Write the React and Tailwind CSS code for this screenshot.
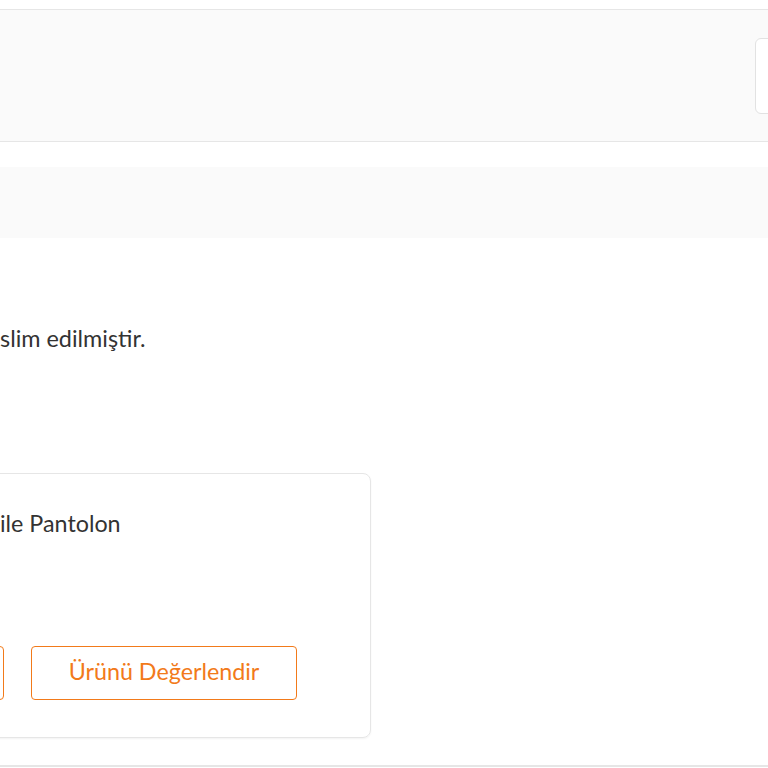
export default function App() {
  const font = { fontFamily: '"Lato", "Open Sans", sans-serif' };
  return (
    <div className="w-[768px] h-[768px] overflow-hidden bg-white flex flex-col" style={font}>
      <div className="h-[9px] shrink-0" />
      <div className="h-[133px] shrink-0 bg-[#fafafa] border-y border-[#e6e6e6] flex items-center justify-end">
        <div className="w-[32px] h-[76px] -mr-[19px] bg-white border border-[#e2e2e2] rounded-md" />
      </div>
      <div className="h-[25px] shrink-0" />
      <div className="h-[71px] shrink-0 bg-[#fafafa]" />
      <div className="h-[86px] shrink-0" />
      <p className="text-[23.4px] leading-[28px] text-[#333333] whitespace-nowrap">slim edilmiştir.</p>
      <div className="h-[121px] shrink-0" />
      <div className="-ml-[300px] w-[671px] h-[265px] shrink-0 border border-[#e6e6e6] rounded-lg shadow-[0_1px_2px_rgba(0,0,0,0.05)] flex flex-col">
        <div className="pl-[299px] pt-[35px]">
          <p className="text-[23.3px] leading-[28px] text-[#333333] whitespace-nowrap">ile Pantolon</p>
        </div>
        <div className="h-[109px] shrink-0" />
        <div className="flex gap-[27px] pl-[37px]">
          <button className="w-[266px] h-[54px] pb-[3px] border border-[#f27a1a] rounded-[4px] bg-white text-[23.3px] text-[#f27a1a] whitespace-nowrap">Kargom Nerede</button>
          <button className="w-[266px] h-[54px] pb-[3px] border border-[#f27a1a] rounded-[4px] bg-white text-[23.3px] text-[#f27a1a] whitespace-nowrap">Ürünü Değerlendir</button>
        </div>
      </div>
      <div className="h-[27px] shrink-0" />
      <div className="h-[2px] shrink-0 bg-[#e6e6e6]" />
    </div>
  );
}
